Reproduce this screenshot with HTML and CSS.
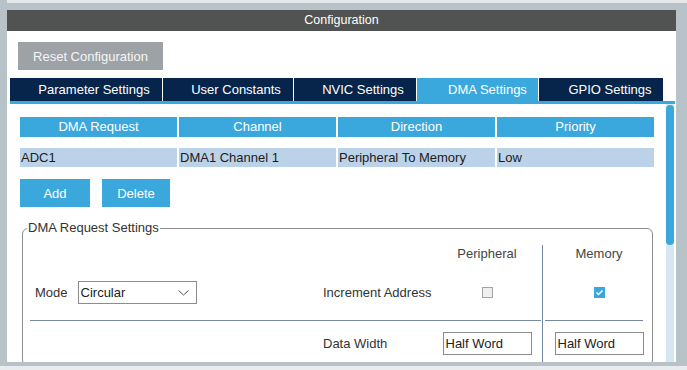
FILE: index.html
```html
<!DOCTYPE html>
<html lang="en">
<head>
    <meta charset="UTF-8">
    <title>Configuration</title>
    <link rel="stylesheet" href="styles.css">
</head>
<body>
    <div class="topline"></div>
    <div class="window">
        <div class="title">Configuration</div>
        <div class="panel">
            <div class="toolbar">
                <button class="reset">Reset Configuration</button>
            </div>
            <div class="tabs">
                <div class="tab tab-param">Parameter Settings</div>
                <div class="tab tab-user">User Constants</div>
                <div class="tab tab-nvic">NVIC Settings</div>
                <div class="tab tab-dma active">DMA Settings</div>
                <div class="tab tab-gpio">GPIO Settings</div>
            </div>
            <div class="body">
                <div class="content">
                    <!-- request table -->
                    <div class="grid head">
                        <div>DMA Request</div>
                        <div>Channel</div>
                        <div>Direction</div>
                        <div>Priority</div>
                    </div>
                    <div class="grid row">
                        <div>ADC1</div>
                        <div>DMA1 Channel 1</div>
                        <div>Peripheral To Memory</div>
                        <div>Low</div>
                    </div>
                    <div class="actions">
                        <button class="btn btn-add">Add</button>
                        <button class="btn btn-delete">Delete</button>
                    </div>

                    <fieldset class="settings">
                        <legend>DMA Request Settings</legend>
                        <div class="form">
                            <div></div>
                            <div></div>
                            <div class="col-head">Peripheral</div>
                            <div class="col-head mem">Memory</div>

                            <div class="mode">
                                <span class="label">Mode</span>
                                <div class="select">
                                    <span>Circular</span>
                                    <svg width="11" height="6" viewBox="0 0 11 6"><polyline points="0.5,0.5 5.5,5 10.5,0.5" fill="none" stroke="#555" stroke-width="1"/></svg>
                                </div>
                            </div>
                            <div class="label">Increment Address</div>
                            <div class="cell"><span class="check"></span></div>
                            <div class="cell mem">
                                <span class="check on">
                                    <svg width="11" height="11" viewBox="0 0 11 11"><polyline points="2.5,5.5 4.5,7.5 8.5,3.5" fill="none" stroke="#fff" stroke-width="1.5"/></svg>
                                </span>
                            </div>

                            <div class="divider"></div>
                            <div class="mem"><div class="divider-line"></div></div>

                            <div></div>
                            <div class="label">Data Width</div>
                            <div class="cell"><div class="field">Half Word</div></div>
                            <div class="cell mem"><div class="field">Half Word</div></div>
                        </div>
                    </fieldset>
                </div>
                <div class="scrollbar"><div class="thumb"></div></div>
            </div>
        </div>
    </div>
    <div class="bottomline"></div>
</body>
</html>
```

FILE: styles.css
```css
* {
    box-sizing: border-box;
}

body {
    margin: 0;
    height: 370px;
    overflow: hidden;
    background: #b8c2c9;
    font-family: "Liberation Sans", Arial, sans-serif;
    font-size: 13px;
    color: #333;
}

.topline {
    height: 3px;
    margin-left: 7px;
    background: #e3e8eb;
}

.window {
    margin: 7px 11px 0 7px;
}

.title {
    height: 21px;
    line-height: 21px;
    background: #505352;
    color: #fff;
    text-align: center;
    font-size: 12.5px;
}

.panel {
    height: 331px;
    background: #fff;
    display: flex;
    flex-direction: column;
}

.toolbar {
    padding: 11px 0 0 11px;
}

button {
    font-family: inherit;
    font-size: 13px;
    border: none;
    padding: 0;
    cursor: pointer;
}

.reset {
    width: 145px;
    height: 28px;
    background: #9da2a7;
    color: #f5f5f5;
}

/* tab strip */
.tabs {
    display: flex;
    gap: 1px;
    margin: 8px 1px 0 3px;
    border-bottom: 3px solid #3aa8dc;
}

.tab {
    height: 23px;
    line-height: 23px;
    padding-left: 16px;
    text-align: center;
    background: #07254a;
    color: #fff;
}

.tab-param { width: 152px; }
.tab-user { width: 130px; }
.tab-nvic { width: 122px; }
.tab-dma { width: 121px; padding-left: 20px; }
.tab-gpio { width: 124px; padding-left: 18px; }

.tab.active {
    background: #3aa8dc;
}

.body {
    flex: 1;
    display: flex;
    overflow: hidden;
}

.content {
    flex: 1;
    overflow: hidden;
    padding: 13px 12px 0 13px;
}

.scrollbar {
    width: 8px;
    margin-right: 2px;
    background: #d6e7f4;
    padding-top: 1px;
}

.thumb {
    height: 140px;
    background: #3aa8dc;
    border-radius: 4px;
}

/* table */
.grid {
    display: grid;
    grid-template-columns: repeat(4, 1fr);
    column-gap: 2px;
}

.head div {
    height: 20px;
    line-height: 20px;
    background: #3aa8dc;
    color: #fff;
    text-align: center;
}

.row {
    margin-top: 11px;
}

.row div {
    height: 19px;
    line-height: 19px;
    background: #bcd2e8;
    color: #1c1c1c;
    padding-left: 1px;
}

.actions {
    display: flex;
    gap: 12px;
    margin-top: 12px;
}

.btn {
    height: 28px;
    background: #3aa8dc;
    color: #fff;
}

.btn-add { width: 70px; }
.btn-delete { width: 68px; }

/* settings box */
.settings {
    margin: 13px 1px 0 2px;
    padding: 9px 0 0 7px;
    border: 1px solid #8d8d8d;
    border-radius: 6px;
    min-width: 0;
}

.settings legend {
    margin-left: -3px;
    padding: 0 1px;
    line-height: 16px;
    color: #333;
}

.form {
    display: grid;
    grid-template-columns: 293px 109px 110px 113px;
    grid-template-rows: 20px 55px 1px 44px;
}

.mem {
    border-left: 1px solid #7688a6;
}

.col-head {
    text-align: center;
    line-height: 18px;
    color: #444;
}

.mode {
    display: flex;
    align-items: center;
    padding-left: 5px;
    gap: 10px;
}

.label {
    display: flex;
    align-items: center;
    color: #333;
}

.select {
    width: 119px;
    height: 23px;
    border: 1px solid #8c8c8c;
    display: flex;
    align-items: center;
    justify-content: space-between;
    padding: 0 7px 0 2px;
    color: #222;
}

.cell {
    display: flex;
    align-items: center;
    justify-content: center;
}

.check {
    width: 11px;
    height: 11px;
    border: 1px solid #a3a3a3;
    background: #efefef;
    display: block;
}

.check.on {
    border: none;
    background: #3aa8dc;
}

.check svg {
    display: block;
}

.divider {
    grid-column: 1 / 4;
    border-top: 1px solid #7688a6;
    margin-right: 1px;
}

.divider-line {
    margin: 0 12px 0 2px;
    border-top: 1px solid #7688a6;
}

.field {
    width: 89px;
    height: 23px;
    line-height: 21px;
    border: 1px solid #8c8c8c;
    padding-left: 2px;
    color: #222;
}

.bottomline {
    margin-top: 4px;
    height: 4px;
    background: #e8ecef;
}
```
